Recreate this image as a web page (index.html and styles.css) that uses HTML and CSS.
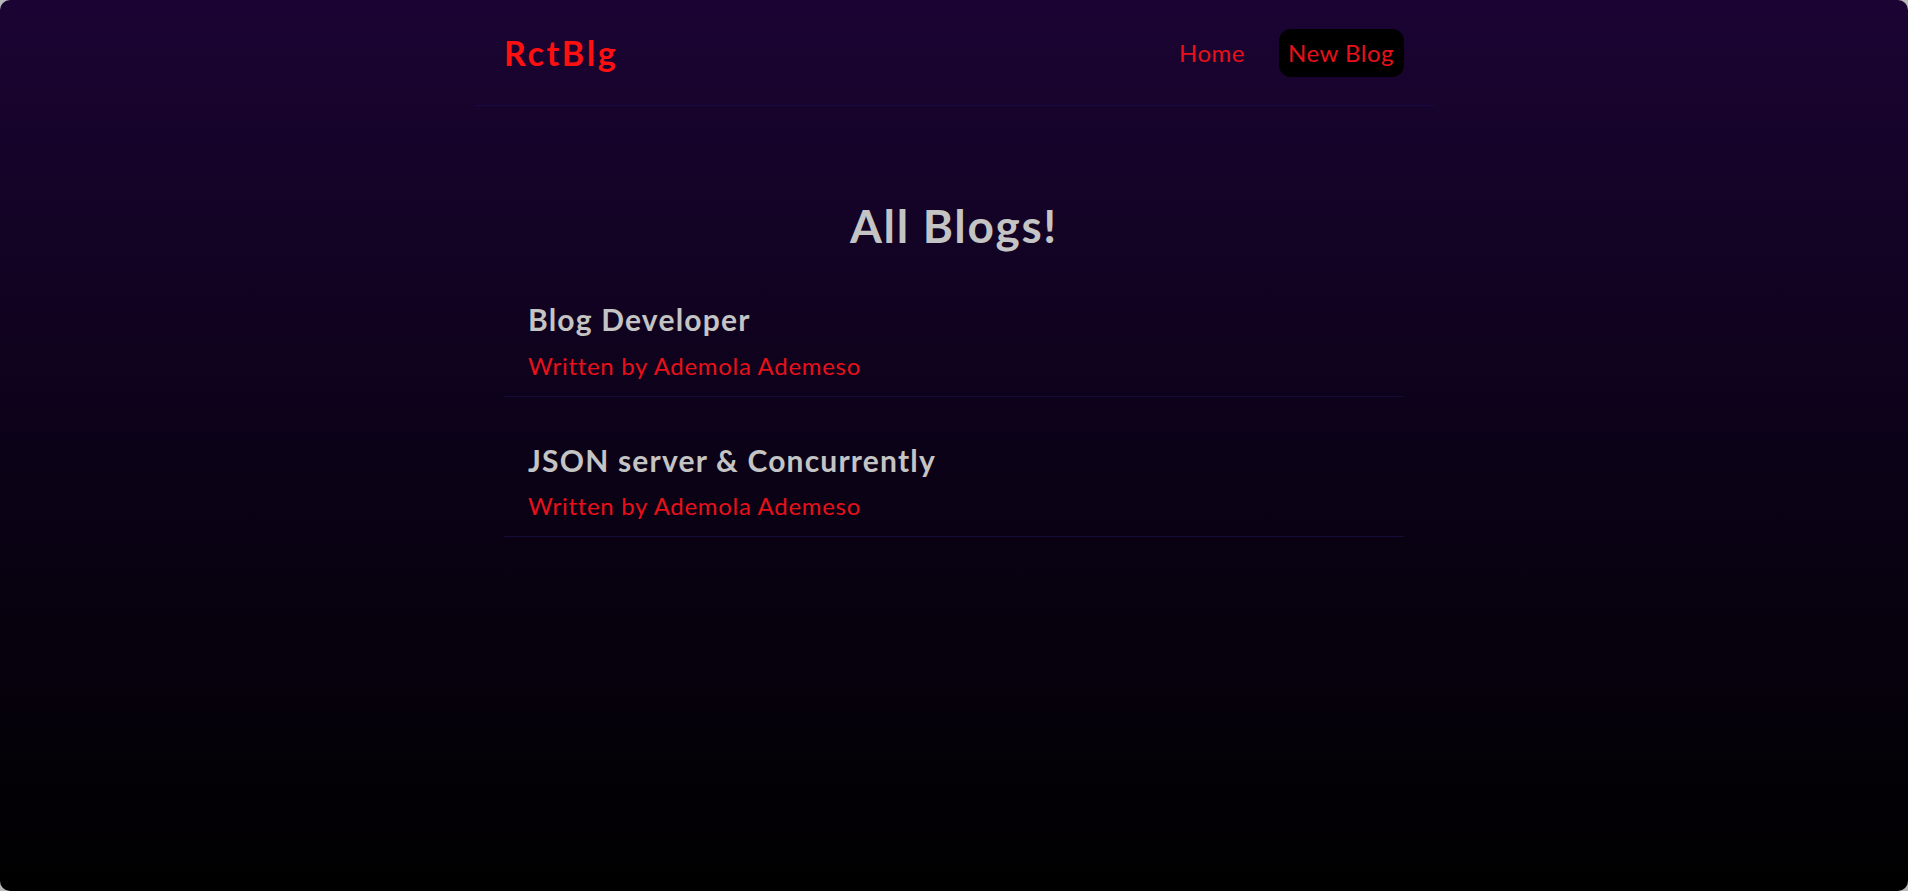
FILE: index.html
```html
<!DOCTYPE html>
<html lang="en">
<head>
<meta charset="utf-8">
<title>RctBlg</title>
<link rel="stylesheet" href="styles.css">
</head>
<body>
<div class="app">
  <nav class="navbar">
    <h1 class="logo">RctBlg</h1>
    <div class="links">
      <a href="#" class="link">Home</a>
      <a href="#" class="link link-new">New Blog</a>
    </div>
  </nav>
  <main class="content">
    <h2 class="page-title">All Blogs!</h2>
    <div class="blog-preview">
      <h2 class="blog-title">Blog Developer</h2>
      <p class="blog-author">Written by Ademola Ademeso</p>
    </div>
    <div class="blog-preview">
      <h2 class="blog-title">JSON server &amp; Concurrently</h2>
      <p class="blog-author">Written by Ademola Ademeso</p>
    </div>
  </main>
</div>
</body>
</html>
```

FILE: styles.css
```css
* {
  margin: 0;
  box-sizing: border-box;
}

html {
  background: #b8b8b8;
}

body {
  margin: 0;
  font-family: "Lato", "Noto Sans", sans-serif;
}

.app {
  height: 100vh;
  border-radius: 10px;
  overflow: hidden;
  background: linear-gradient(to bottom, #1b0433 0%, #0c0218 50%, #000000 100%);
}

.navbar {
  max-width: 960px;
  margin: 0 auto;
  padding: 29px 30px 28px;
  display: flex;
  align-items: center;
  border-bottom: 1.5px solid #170a42;
}

.logo {
  font-size: 34px;
  font-weight: 700;
  letter-spacing: 2.7px;
  color: #ff1010;
  line-height: 1.25;
}

.links {
  margin-left: auto;
  display: flex;
  align-items: center;
}

.link {
  margin-left: 24px;
  padding: 9px 10px 9px 9px;
  font-size: 24px;
  line-height: 30px;
  letter-spacing: 0.5px;
  color: #e8101a;
  text-decoration: none;
  border-radius: 12px;
}

.link-new {
  background: #000000;
}

.content {
  max-width: 960px;
  margin: 60px auto;
  padding: 30px;
}

.page-title {
  text-align: center;
  font-size: 46px;
  font-weight: 700;
  line-height: 60px;
  letter-spacing: 1.7px;
  color: #c4c4c4;
  margin-bottom: 30px;
}

.blog-preview {
  padding: 15px 24px;
  margin: 30px 0;
  border-bottom: 1.5px solid #130b38;
}

.page-title + .blog-preview {
  margin-top: 0;
}

.blog-title {
  font-size: 30px;
  font-weight: 700;
  line-height: 37.5px;
  letter-spacing: 1.2px;
  color: #c4c4c4;
  margin-bottom: 12px;
}

.blog-author {
  font-size: 24px;
  line-height: 30px;
  letter-spacing: 0.7px;
  color: #e8101a;
}
```
